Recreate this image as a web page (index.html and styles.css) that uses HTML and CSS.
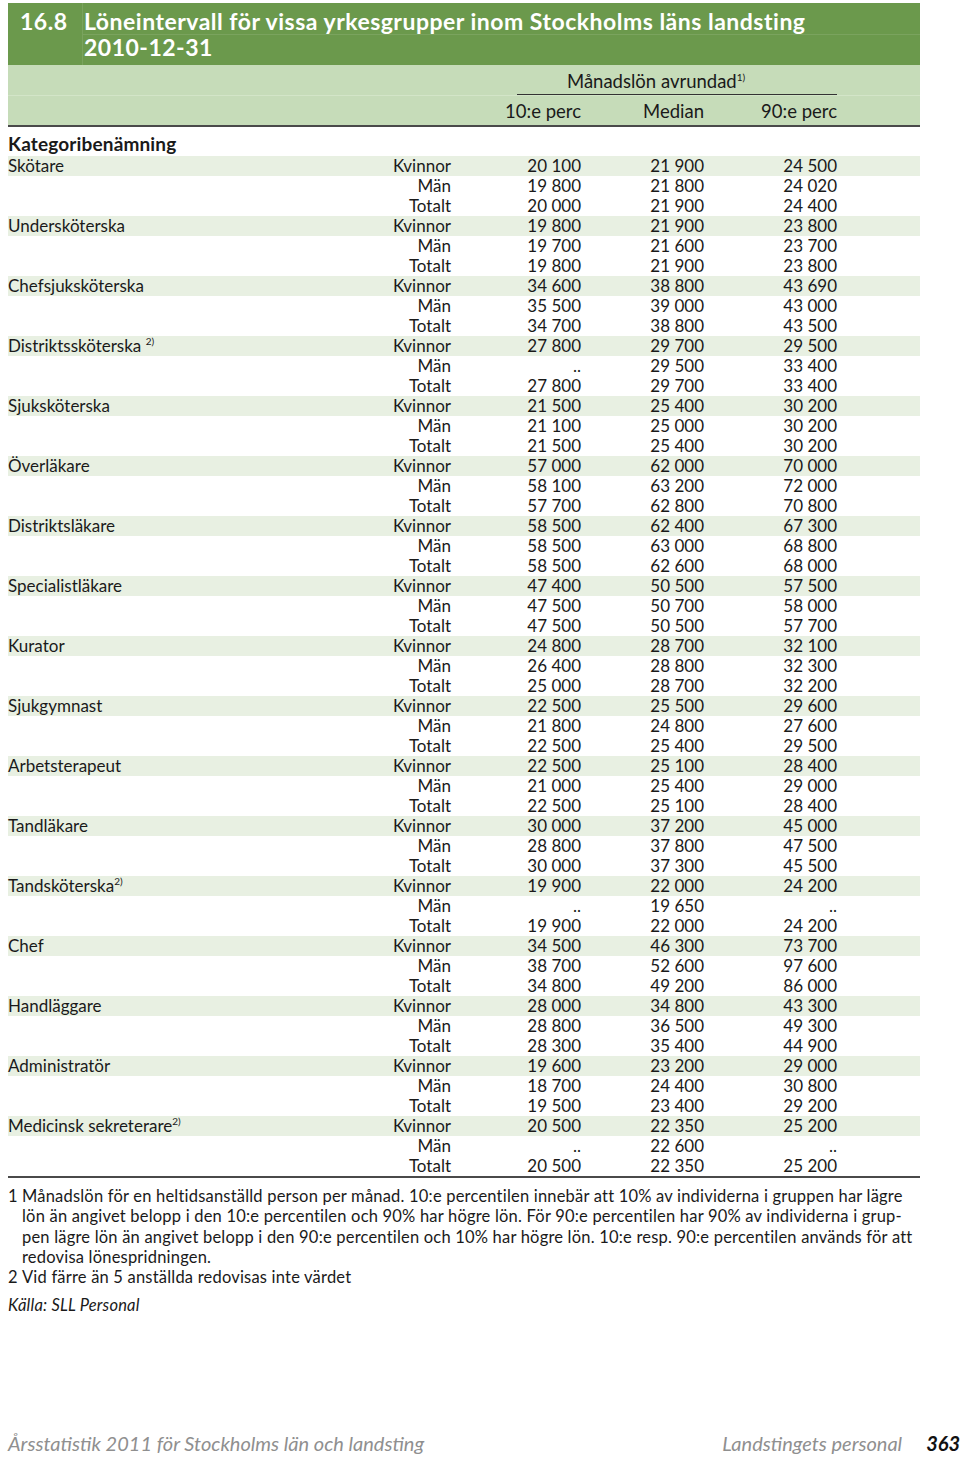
FILE: index.html
```html
<!DOCTYPE html>
<html lang="sv">
<head>
<meta charset="utf-8">
<title>16.8 Löneintervall</title>
<link rel="stylesheet" href="styles.css">
</head>
<body>
<div class="page">
  <div class="titlebar">
    <div class="tnum">16.8</div>
    <div class="tl1">Löneintervall för vissa yrkesgrupper inom Stockholms läns landsting</div>
    <div class="tl2">2010-12-31</div>
  </div>
  <table class="tbl">
    <colgroup>
      <col class="c-lab"><col class="c-sex"><col class="c-v1"><col class="c-v2"><col class="c-v3"><col class="c-pad">
    </colgroup>
    <thead>
      <tr class="h1"><th></th><th></th><th colspan="3" class="span"><span class="spantxt">Månadslön avrundad<sup>1)</sup></span></th><th></th></tr>
      <tr class="h2"><th></th><th></th><th>10:e perc</th><th>Median</th><th>90:e perc</th><th></th></tr>
    </thead>
    <tbody id="body">
      <tr class="cat"><td colspan="6">Kategoribenämning</td></tr>
    </tbody>
  </table>
  <div class="notes">
    <p class="note"><span class="n">1</span><span>Månadslön för en heltidsanställd person per månad. 10:e percentilen innebär att 10% av individerna i gruppen har lägre<br>lön än angivet belopp i den 10:e percentilen och 90% har högre lön. För 90:e percentilen har 90% av individerna i grup-<br>pen lägre lön än angivet belopp i den 90:e percentilen och 10% har högre lön. 10:e resp. 90:e percentilen används för att<br>redovisa lönespridningen.</span></p>
    <p class="note"><span class="n">2</span><span>Vid färre än 5 anställda redovisas inte värdet</span></p>
    <p class="src">Källa: SLL Personal</p>
  </div>
  <div class="footer">
    <span class="fl">Årsstatistik 2011 för Stockholms län och landsting</span>
    <span class="fr">Landstingets personal</span>
    <span class="pg">363</span>
  </div>
</div>
<script src="app.js"></script>
</body>
</html>
```
FILE: app.js
```js
const data = [
  ["Skötare", "", [["20 100","21 900","24 500"],["19 800","21 800","24 020"],["20 000","21 900","24 400"]]],
  ["Undersköterska", "", [["19 800","21 900","23 800"],["19 700","21 600","23 700"],["19 800","21 900","23 800"]]],
  ["Chefsjuksköterska", "", [["34 600","38 800","43 690"],["35 500","39 000","43 000"],["34 700","38 800","43 500"]]],
  ["Distriktssköterska ", "2)", [["27 800","29 700","29 500"],["..","29 500","33 400"],["27 800","29 700","33 400"]]],
  ["Sjuksköterska", "", [["21 500","25 400","30 200"],["21 100","25 000","30 200"],["21 500","25 400","30 200"]]],
  ["Överläkare", "", [["57 000","62 000","70 000"],["58 100","63 200","72 000"],["57 700","62 800","70 800"]]],
  ["Distriktsläkare", "", [["58 500","62 400","67 300"],["58 500","63 000","68 800"],["58 500","62 600","68 000"]]],
  ["Specialistläkare", "", [["47 400","50 500","57 500"],["47 500","50 700","58 000"],["47 500","50 500","57 700"]]],
  ["Kurator", "", [["24 800","28 700","32 100"],["26 400","28 800","32 300"],["25 000","28 700","32 200"]]],
  ["Sjukgymnast", "", [["22 500","25 500","29 600"],["21 800","24 800","27 600"],["22 500","25 400","29 500"]]],
  ["Arbetsterapeut", "", [["22 500","25 100","28 400"],["21 000","25 400","29 000"],["22 500","25 100","28 400"]]],
  ["Tandläkare", "", [["30 000","37 200","45 000"],["28 800","37 800","47 500"],["30 000","37 300","45 500"]]],
  ["Tandsköterska", "2)", [["19 900","22 000","24 200"],["..","19 650",".."],["19 900","22 000","24 200"]]],
  ["Chef", "", [["34 500","46 300","73 700"],["38 700","52 600","97 600"],["34 800","49 200","86 000"]]],
  ["Handläggare", "", [["28 000","34 800","43 300"],["28 800","36 500","49 300"],["28 300","35 400","44 900"]]],
  ["Administratör", "", [["19 600","23 200","29 000"],["18 700","24 400","30 800"],["19 500","23 400","29 200"]]],
  ["Medicinsk sekreterare", "2)", [["20 500","22 350","25 200"],["..","22 600",".."],["20 500","22 350","25 200"]]]
];
const sexes = ["Kvinnor", "Män", "Totalt"];
const body = document.getElementById("body");
data.forEach(([name, sup, rows]) => {
  rows.forEach((vals, i) => {
    const tr = document.createElement("tr");
    if (i === 0) tr.className = "shade";
    const lab = document.createElement("td");
    lab.className = "lab";
    if (i === 0) {
      lab.textContent = name;
      if (sup) {
        const s = document.createElement("sup");
        s.textContent = sup;
        lab.appendChild(s);
      }
    }
    tr.appendChild(lab);
    const sx = document.createElement("td");
    sx.className = "num";
    sx.textContent = sexes[i];
    tr.appendChild(sx);
    vals.forEach(v => {
      const td = document.createElement("td");
      td.className = "num";
      td.textContent = v;
      tr.appendChild(td);
    });
    tr.appendChild(document.createElement("td"));
    body.appendChild(tr);
  });
});
```
FILE: styles.css
```css
html, body { margin: 0; padding: 0; background: #fff; }
body {
  font-family: Lato, "Open Sans", sans-serif;
  color: #1a1a1a;
}
.page {
  width: 912px;
  min-height: 1454px;
  padding: 3px 40px 0 8px;
  display: flex;
  flex-direction: column;
}
.titlebar {
  background: #6b994c;
  color: #fff;
  font-weight: bold;
  font-size: 23px;
  letter-spacing: 0.5px;
  height: 62px;
  display: grid;
  grid-template-columns: 75px 1fr;
  grid-template-rows: 32px 30px;
}
.tnum {
  grid-row: 1 / 3;
  padding: 5px 0 0 12px;
  line-height: 26px;
  border-right: 1px solid rgba(255, 255, 255, 0.1);
}
.tl1 {
  padding: 5px 0 0 1px;
  line-height: 26px;
  border-bottom: 1px solid rgba(255, 255, 255, 0.1);
}
.tl2 { padding-left: 1px; line-height: 24px; }
.tbl {
  width: 912px;
  border-collapse: collapse;
  table-layout: fixed;
  font-size: 17px;
}
.c-lab { width: 312px; }
.c-sex { width: 131px; }
.c-v1 { width: 130px; }
.c-v2 { width: 123px; }
.c-v3 { width: 133px; }
.c-pad { width: 83px; }
.tbl th, .tbl td { padding: 0; white-space: nowrap; }
thead th { background: #c6dcb9; font-weight: normal; font-size: 18.5px; }
.h1 th { height: 30px; vertical-align: middle; border-bottom: 1px solid #d3e5c8; }
.h1 .span { text-align: left; }
.spantxt {
  display: block;
  margin-left: 66px;
  width: 322px;
  box-sizing: border-box;
  padding: 4px 0 1px 50px;
  border-bottom: 1px solid #333;
  line-height: 24px;
}
.h2 th { height: 29px; text-align: right; border-bottom: 2px solid #4a4a4a; }
sup { font-size: 10px; line-height: 0; vertical-align: 7px; }
.cat td { font-weight: bold; height: 27px; padding-bottom: 2px; vertical-align: bottom; line-height: 20px; font-size: 19px; letter-spacing: 0.15px; }
tbody tr { height: 20px; }
tbody td { line-height: 20px; height: 20px; }
.shade td { background: #e8f0e2; }
.num { text-align: right; }
tbody tr:last-child td { border-bottom: 2px solid #4a4a4a; }
.notes { font-size: 16.5px; letter-spacing: 0.2px; line-height: 20.3px; margin-top: 8px; }
.note { margin: 0; display: flex; }
.note .n { width: 14px; flex: none; }
.src { margin: 8px 0 0; font-style: italic; }
.footer {
  margin-top: auto;
  display: flex;
  font-style: italic;
  font-size: 20px;
  color: #8f8f8f;
  padding-bottom: 2px;
}
.fl { flex: 1; }
.fr { margin-right: 24px; }
.pg { color: #111; font-weight: bold; margin-right: -40px; }
```
